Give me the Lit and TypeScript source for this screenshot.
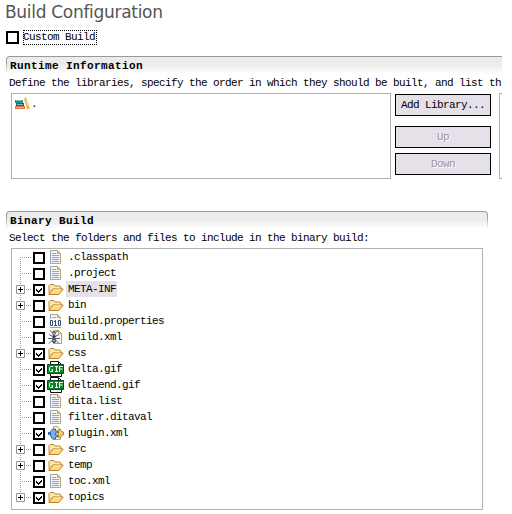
import { LitElement, html, css, svg } from "lit";
import { customElement, property } from "lit/decorators.js";

type Kind = "file" | "folder" | "props" | "ant" | "gif" | "plugin";
type Row = [name: string, kind: Kind, checked: boolean, expandable: boolean, selected?: boolean];

const ROWS: Row[] = [
  [".classpath", "file", false, false],
  [".project", "file", false, false],
  ["META-INF", "folder", true, true, true],
  ["bin", "folder", false, true],
  ["build.properties", "props", false, false],
  ["build.xml", "ant", false, false],
  ["css", "folder", true, true],
  ["delta.gif", "gif", true, false],
  ["deltaend.gif", "gif", true, false],
  ["dita.list", "file", false, false],
  ["filter.ditaval", "file", false, false],
  ["plugin.xml", "plugin", true, false],
  ["src", "folder", false, true],
  ["temp", "folder", false, true],
  ["toc.xml", "file", true, false],
  ["topics", "folder", true, true],
];

const page = svg`
  <path d="M2.5 1.5h7l3 3v10h-10z" fill="#f1f6fd" stroke="#b3a67c"/>
  <path d="M2.5 14V1.500" stroke="#93a2b4"/>
  <path d="M9.5 1.5v3h3z" fill="#e8d49a" stroke="#c3a660"/>`;

const ICONS: Record<Kind, unknown> = {
  file: svg`${page}<path d="M4 4.500h4M4 6.500h7M4 8.500h7M4 10.500h7M4 12.500h7" stroke="#83a5d6"/>`,
  folder: svg`
    <path d="M1 12.500v-8l1-1h4l1 1.500h5l1 1v3" fill="#fbe9b0" stroke="#c08a35"/>
    <path d="M.8 13.500l4-5.500h10.500l-4.500 5.500z" fill="#fdd67d" stroke="#bb8026"/>
    <path d="M5.500 9h8" stroke="#fff0bd"/>`,
  props: svg`${page}
    <path d="M4 4.500h4" stroke="#83a5d6"/>
    <path d="M1 6h13v8H1z" fill="#f6fafe"/>
    <path d="M2.500 7.500h2v5h-2zM10.500 7.500h2v5h-2zM6 8.500h1.500M7.500 7v6M6 12.500h3" stroke="#31517c"/>
    <path d="M2 14.500h11" stroke="#a9a58c"/>`,
  ant: svg`
    <path d="M5.500 1.500h5l3 3v10h-8z" fill="#faf6e8" stroke="#b8a468"/>
    <path d="M10.500 1.500v3h3" stroke="#b8a468"/>
    <path d="M2 1.500l3 2.500M10 1.500L7 4M1 5.500l4 2M11 5.500l-4 2M0 9.500h12M1 14.500l4-4M11 14.500l-4-4" stroke="#566070"/>
    <circle cx="6" cy="4" r="2" fill="#59677d"/><circle cx="6" cy="7.500" r="1.600" fill="#36404e"/>
    <ellipse cx="6" cy="11.500" rx="2" ry="2.800" fill="#4b586c"/>
    <path d="M5 4.500h2M5 11.500h2" stroke="#b9c3d2"/>`,
  gif: svg`
    <path d="M2.500 .5h8l3 3v12h-11z" fill="#fff" stroke="#111"/>
    <path d="M10.500 .5v3h3" stroke="#111"/>
    <path d="M-.5 3.500h16v9h-16z" fill="#0a8426" stroke="#064d14"/>
    <path d="M5 5.500H2.500l-1 1v3l1 1h2V8.500H3.500M7 5.500h3M8.500 5.500v5M7 10.500h3M11.500 11V5.500H15M11.500 8h3" stroke="#fff"/>`,
  plugin: svg`
    <path d="M5.500 1.500h4l3 3v10h-7z" fill="#fbf4d4" stroke="#b8a468"/>
    <path d="M0 8.500h3" stroke="#3d6fae" stroke-width="3"/>
    <path d="M2.500 6.500l2-2.500h3v2h2v2h-2v2h2v2h-2v2h-3l-2-3z" fill="#7eb0e6" stroke="#3468aa"/>
    <path d="M10.500 4.500h2l1.500 2.500h1.500v3H14l-1.500 2.500h-2z" fill="#f7cf60" stroke="#b9852b"/>`,
};

@customElement("check-box")
class CheckBox extends LitElement {
  @property({ type: Boolean }) checked = false;
  static styles = css`
    :host { display: block; width: 13px; height: 13px; box-sizing: border-box; border: 2px solid #000; background: #fff; flex: none; }
    svg { display: block; width: 8px; height: 8px; }
  `;
  render() {
    return this.checked
      ? html`<svg viewBox="0 0 8 8"><path d="M1.500 3v2M2.500 4v2M3.500 5v2M4.500 4v2M5.500 3v2M6.500 2v2" stroke="#000"/></svg>`
      : null;
  }
}

@customElement("tree-row")
class TreeRow extends LitElement {
  @property({ attribute: false }) row!: Row;
  static styles = css`
    :host { display: flex; height: 16px; }
    .branch { width: 21px; height: 16px; flex: none; }
    check-box { width: 12px; height: 12px; margin-top: 3px; }
    .icon { width: 16px; height: 16px; flex: none; margin: 0 2px 0 3px; overflow: visible; }
    .name { height: 16px; line-height: 17px; padding: 0 1px 0 2px; white-space: pre; }
    .selected { background: #e6e0e8; }
  `;
  render() {
    const [name, kind, checked, expandable, selected] = this.row;
    const first = name === ROWS[0][0];
    const last = name === ROWS[ROWS.length - 1][0];
    return html`
      <svg class="branch" viewBox="0 0 21 16">
        <path d="M8.500 ${first ? 8 : 0}V${last ? 8 : 16}M8 8.500h11" stroke="#999" stroke-dasharray="1 1" fill="none"/>
        ${expandable
          ? svg`<path d="M4.500 4.500h8v8h-8z" fill="#fff" stroke="#969696"/><path d="M6 8.500h5M8.500 6v5" stroke="#000"/>`
          : null}
      </svg>
      <check-box ?checked=${checked}></check-box>
      <svg class="icon" viewBox="0 0 16 16" fill="none">${ICONS[kind]}</svg>
      <span class="name ${selected ? "selected" : ""}">${name}</span>`;
  }
}

@customElement("app-root")
class AppRoot extends LitElement {
  static styles = css`
    :host { display: block; width: 512px; height: 514px; overflow: hidden; background: #fff; color: #000;
      font: 11px/16px "Liberation Mono", monospace; letter-spacing: -0.6px; }
    .page { width: 502px; height: 514px; overflow: hidden; box-sizing: border-box; padding-left: 5px; }
    h1 { margin: 0; height: 30px; font: 17px/24px "DejaVu Sans", sans-serif; letter-spacing: -0.3px; color: #555; white-space: nowrap; }
    .custom { display: flex; align-items: center; height: 15px; gap: 4px; padding-left: 1px; }
    .focus { height: 13px; line-height: 13px; border: 1px dotted #000; width: 72px; white-space: nowrap; text-indent: -1px; }
    .head { box-sizing: border-box; height: 18px; margin-left: 1px; padding: 1px 0 0 1px;
      background: linear-gradient(#999 30%, #fff); border-radius: 4px 4px 0 0; }
    .fill { height: 17px; padding-left: 3px; background: linear-gradient(#ececec 45%, #fff); border-radius: 3px 3px 0 0;
      font-weight: bold; line-height: 19px; letter-spacing: 0.4px; }
    .runtime { margin-top: 11px; width: 510px; }
    .binary { margin-top: 32px; width: 482px; padding-right: 1px; }
    .desc { height: 19px; line-height: 18px; padding-left: 4px; white-space: nowrap; }
    .cols { display: flex; margin-left: 6px; width: 540px; height: 86px; }
    .list { width: 380px; box-sizing: border-box; border: 1px solid #b0b0b0; display: flex; padding: 2px; flex: none; }
    .list svg { width: 16px; height: 16px; flex: none; margin-right: 1px; }
    .buttons { width: 96px; margin: 1px 8px 0 4px; flex: none; }
    .btn { height: 22px; box-sizing: border-box; border: 1px solid #000; background: #e6e0e8; text-align: center; line-height: 20px; }
    .up { margin-top: 10px; }
    .down { margin-top: 5px; }
    .off { color: #9c969e; text-shadow: 1px 1px #fff; }
    .side { width: 50px; border: 1px solid #b0b0b0; }
    .tree { margin-left: 6px; width: 472px; height: 262px; box-sizing: border-box; border: 1px solid #b0b0b0; }
  `;
  render() {
    return html`<div class="page">
      <h1>Build Configuration</h1>
      <div class="custom"><check-box></check-box><span class="focus">Custom Build</span></div>
      <div class="head runtime"><div class="fill">Runtime Information</div></div>
      <div class="desc">Define the libraries, specify the order in which they should be built, and list th</div>
      <div class="cols">
        <div class="list">
          <svg viewBox="0 0 16 16">
            <path d="M1 4h8v3H1z" fill="#1f8d90"/><path d="M2 7h8v3H2z" fill="#255f8c"/><path d="M1 10h10v3H1z" fill="#d8744c"/>
            <path d="M2 4.500h6M3 8.500h6" stroke="#6cc3c4"/><path d="M2 11.500h8" stroke="#f2b08e"/>
            <path d="M10 3l2-2 4 12h-3z" fill="#efb440"/><path d="M12 4l2.500 7" stroke="#fbe08b"/>
          </svg><span>.</span>
        </div>
        <div class="buttons">
          <div class="btn">Add Library...</div>
          <div class="btn up off">Up</div>
          <div class="btn down off">Down</div>
        </div>
        <div class="side"></div>
      </div>
      <div class="head binary"><div class="fill">Binary Build</div></div>
      <div class="desc">Select the folders and files to include in the binary build:</div>
      <div class="tree">${ROWS.map((r) => html`<tree-row .row=${r}></tree-row>`)}</div>
    </div>`;
  }
}
